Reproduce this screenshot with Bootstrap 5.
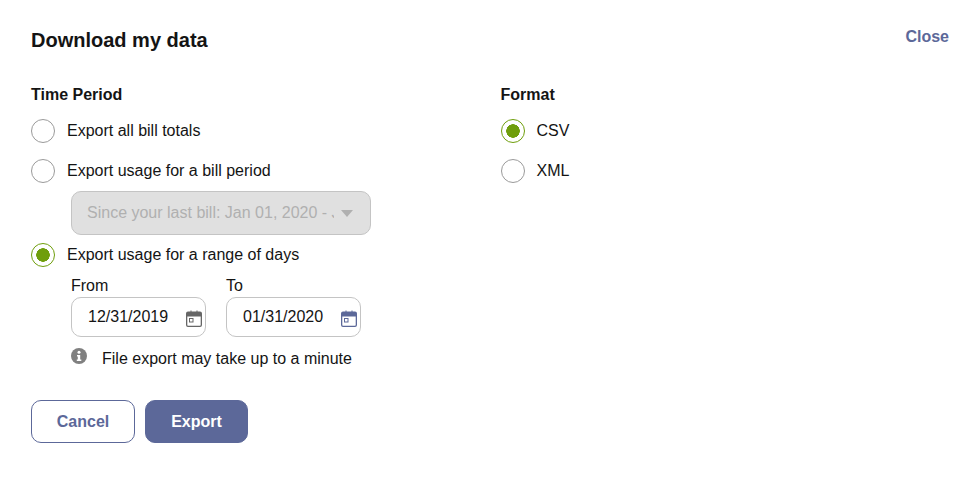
<!DOCTYPE html>
<html lang="en">
<head>
  <meta charset="UTF-8" />
  <meta name="viewport" content="width=device-width, initial-scale=1" />
  <title>Download my data</title>
  <link href="https://cdn.jsdelivr.net/npm/bootstrap@5.3.3/dist/css/bootstrap.min.css" rel="stylesheet" />
  <style>
    body {
      font-family: "Liberation Sans", Arial, sans-serif;
      font-size: 16px;
      color: #141414;
      background: #fff;
    }
    .dl-page {
      padding: 26px 18px 0 31px;
    }
    .dl-title {
      font-size: 20px;
      font-weight: 700;
      line-height: 28px;
      margin: 0;
    }
    .dl-close {
      font-weight: 700;
      color: #5c6899;
      text-decoration: none;
      line-height: 20px;
      margin-top: 1px;
    }
    .dl-head {
      height: 59px;
    }
    .dl-left {
      width: 469.5px;
    }
    .dl-label {
      font-weight: 700;
      line-height: 20px;
      margin-bottom: 14px;
    }
    .dl-radio {
      height: 24px;
      gap: 12px;
      margin-bottom: 16px;
    }
    .dl-radio input {
      appearance: none;
      width: 24px;
      height: 24px;
      margin: 0;
      border: 1px solid #9a9a9a;
      border-radius: 50%;
      background: #fff;
      flex: none;
    }
    .dl-radio input:checked {
      border-color: #6f9e0c;
      background: radial-gradient(circle, #6f9e0c 0, #6f9e0c 6.5px, #fff 7px);
    }
    .dl-radio label {
      line-height: 24px;
    }
    .dl-indent {
      padding-left: 40px;
    }
    .dl-picker {
      margin-top: -8px;
    }
    .dl-select {
      width: 300px;
      height: 44px;
      margin-bottom: 8px;
      padding: 0 36px 0 15px;
      font-size: 16px;
      color: #b0b0b0;
      border: 1px solid #c4c4c4;
      border-radius: 10px;
      background: #e0e0e0;
      appearance: none;
    }
    .dl-select:disabled {
      color: #b0b0b0;
      background: #e0e0e0;
    }
    .dl-caret {
      top: 19px;
      right: 18px;
      width: 0;
      height: 0;
      border-left: 6px solid transparent;
      border-right: 6px solid transparent;
      border-top: 7px solid #b0b0b0;
    }
    .dl-dates {
      gap: 20px;
      margin-top: -7px;
    }
    .dl-date {
      width: 135px;
    }
    .dl-date label {
      display: block;
      line-height: 20px;
      margin-bottom: 1px;
    }
    .dl-date input {
      display: block;
      width: 135px;
      height: 40px;
      padding: 0 0 0 16px;
      font-size: 16px;
      color: #141414;
      border: 1px solid #c4c4c4;
      border-radius: 10px;
      outline: 0;
    }
    .dl-cal {
      top: 13px;
      right: 4px;
      width: 16px;
      height: 17px;
    }
    .dl-note {
      gap: 15px;
      margin-top: 11px;
      line-height: 22px;
    }
    .dl-note svg {
      flex: none;
    }
    .dl-actions {
      gap: 10px;
      margin-top: 30px;
    }
    .dl-btn {
      height: 43px;
      padding: 0;
      font-size: 16px;
      font-weight: 700;
      border-radius: 10px;
      border: 1px solid #5c6899;
    }
    .dl-cancel {
      width: 104px;
      color: #5c6899;
      background: #fff;
    }
    .dl-export {
      width: 103px;
      color: #fff;
      background: #5c6899;
    }
  </style>
</head>
<body>

<div class="dl-page">
  <div class="dl-head d-flex justify-content-between align-items-start">
    <h1 class="dl-title">Download my data</h1>
    <a class="dl-close" href="#">Close</a>
  </div>

  <div class="d-flex">
    <div class="dl-left">
      <div class="dl-label">Time Period</div>

      <div class="dl-radio d-flex align-items-center">
        <input type="radio" name="period" id="periodAll" />
        <label for="periodAll">Export all bill totals</label>
      </div>
      <div class="dl-radio d-flex align-items-center">
        <input type="radio" name="period" id="periodBill" />
        <label for="periodBill">Export usage for a bill period</label>
      </div>

      <div class="dl-indent">
        <div class="dl-picker position-relative d-inline-block align-top">
          <select class="form-select dl-select" disabled>
            <option>Since your last bill: Jan 01, 2020 - Jan 31, 2020</option>
          </select>
          <span class="dl-caret position-absolute"></span>
        </div>
      </div>

      <div class="dl-radio d-flex align-items-center">
        <input type="radio" name="period" id="periodRange" checked />
        <label for="periodRange">Export usage for a range of days</label>
      </div>

      <div class="dl-indent">
        <div class="dl-dates d-flex">
          <div class="dl-date">
            <label for="dateFrom">From</label>
            <div class="position-relative">
              <input type="text" id="dateFrom" value="12/31/2019" />
              <svg class="dl-cal position-absolute" viewBox="0 0 16 17">
                <path fill="#666" d="M3 1.500h1.500V.5h1V1.500h5V.5h1v1H14A2 2 0 0 1 16 3.500v11.500a2 2 0 0 1-2 2H2a2 2 0 0 1-2-2V3.500A2 2 0 0 1 2 1.500zM1.300 6.500V15a.7.7 0 0 0 .7.7h12a.7.7 0 0 0 .7-.7V6.500z"/>
                <path fill="#666" d="M3 8h4.500v4.500H3zm1 1v2.500h2.500V9z"/>
              </svg>
            </div>
          </div>
          <div class="dl-date">
            <label for="dateTo">To</label>
            <div class="position-relative">
              <input type="text" id="dateTo" value="01/31/2020" />
              <svg class="dl-cal position-absolute" viewBox="0 0 16 17">
                <path fill="#5c6899" d="M3 1.500h1.500V.5h1V1.500h5V.5h1v1H14A2 2 0 0 1 16 3.500v11.500a2 2 0 0 1-2 2H2a2 2 0 0 1-2-2V3.500A2 2 0 0 1 2 1.500zM1.300 6.500V15a.7.7 0 0 0 .7.7h12a.7.7 0 0 0 .7-.7V6.500z"/>
                <path fill="#5c6899" d="M3 8h4.500v4.500H3zm1 1v2.500h2.500V9z"/>
              </svg>
            </div>
          </div>
        </div>
        <div class="dl-note d-flex align-items-start">
          <svg width="16" height="16" viewBox="0 0 16 16">
            <circle cx="8" cy="8" r="8" fill="#808080"/>
            <circle cx="8" cy="4.200" r="1.500" fill="#fff"/>
            <path fill="#fff" d="M6 7h3.200v4.500H10.300V13H5.800v-1.500h1V8.500H6z"/>
          </svg>
          <span>File export may take up to a minute</span>
        </div>
      </div>
    </div>

    <div>
      <div class="dl-label">Format</div>
      <div class="dl-radio d-flex align-items-center">
        <input type="radio" name="format" id="formatCsv" checked />
        <label for="formatCsv">CSV</label>
      </div>
      <div class="dl-radio d-flex align-items-center">
        <input type="radio" name="format" id="formatXml" />
        <label for="formatXml">XML</label>
      </div>
    </div>
  </div>

  <div class="dl-actions d-flex">
    <button type="button" class="btn dl-btn dl-cancel">Cancel</button>
    <button type="button" class="btn dl-btn dl-export">Export</button>
  </div>
</div>

<script src="https://cdn.jsdelivr.net/npm/bootstrap@5.3.3/dist/js/bootstrap.bundle.min.js"></script>
</body>
</html>
